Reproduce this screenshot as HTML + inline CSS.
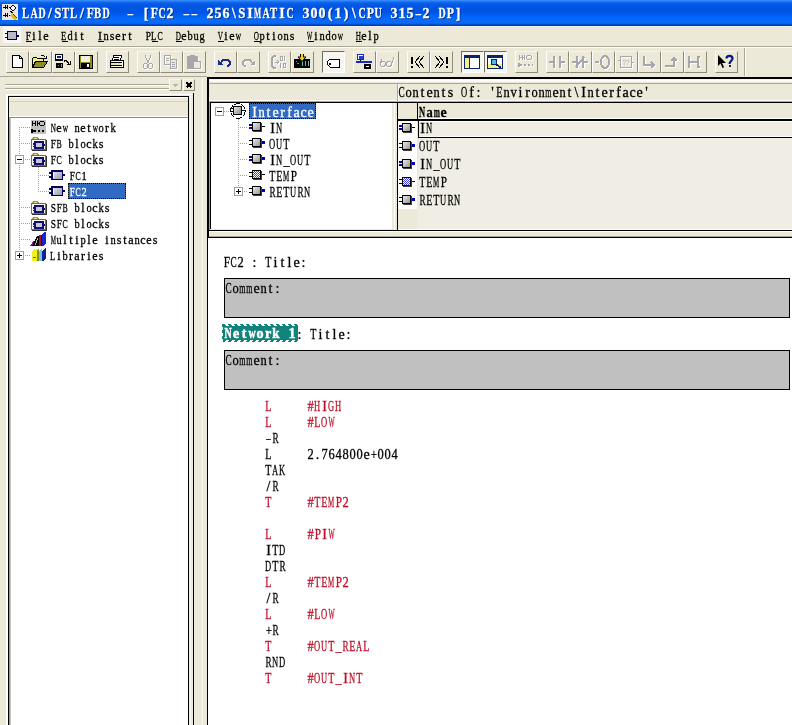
<!DOCTYPE html><html><head><meta charset="utf-8"><style>
*{margin:0;padding:0;box-sizing:border-box}
html,body{width:792px;height:725px;overflow:hidden;background:#ECE9D8}
body>div,body>svg{position:absolute}
.t{will-change:transform;position:absolute;white-space:nowrap;font-family:"Liberation Serif",serif;line-height:16px;color:#000;display:flex;-webkit-text-stroke:0.3px}
.t i{display:flex;justify-content:center;font-style:normal;flex:none}
.t b{display:block;font-weight:inherit;flex:none}
.red{color:#BC0E28}
.btn{border-style:solid;border-width:1px;border-color:#F6F5EE #8D8A7A #8D8A7A #FFFFFF}
.prs{border-style:solid;border-width:1px;border-color:#6E6C60 #FFFFFF #FFFFFF #6E6C60;background:#F7F6F0}
</style></head><body>
<div style="left:0px;top:0px;width:792px;height:26px;background:linear-gradient(to bottom,#3D95FF 0px,#2A7BF8 1px,#0A5FEA 3px,#0055E3 6px,#0054E3 12px,#005EF4 15px,#0068FC 18px,#0A6CF8 22px,#0862EE 23.5px,#0040B8 25px,#0035A8 26px)"></div>
<svg style="left:2px;top:4px" width="16" height="16" viewBox="0 0 16 16" shape-rendering="crispEdges"><rect x="0" y="0" width="16" height="16" fill="#E8E4E8"/><path d="M1 3h4M1 11h4M3 1v4M5 1v4M3 9v4M5 9v4M7 3h3M7 11h2" stroke="#000" stroke-width="1" fill="none"/><path d="M11 1l3 3-3 3-3-3z" stroke="#000" fill="#fff"/><path d="M8 7l3 1 -1 2z" fill="#000"/><path d="M10 10l5 5M9 11l5 5" stroke="#E8C000" stroke-width="2"/><path d="M11 10l4 4" stroke="#C00000" stroke-width="1"/></svg>
<div class="t" style="left:22px;top:6px;font-size:14px;font-weight:bold;color:#fff;text-shadow:1px 1px 0 #0A2A7A"><i style="width:8px"><b style="transform:scaleX(0.77)">L</b></i><i style="width:8px"><b style="transform:scaleX(0.71)">A</b></i><i style="width:8px"><b style="transform:scaleX(0.71)">D</b></i><i style="width:8px"><b>/</b></i><i style="width:8px"><b style="transform:scaleX(0.92)">S</b></i><i style="width:8px"><b style="transform:scaleX(0.77)">T</b></i><i style="width:8px"><b style="transform:scaleX(0.77)">L</b></i><i style="width:8px"><b>/</b></i><i style="width:8px"><b style="transform:scaleX(0.84)">F</b></i><i style="width:8px"><b style="transform:scaleX(0.77)">B</b></i><i style="width:8px"><b style="transform:scaleX(0.71)">D</b></i><i style="width:8px"></i><i style="width:8px"></i><i style="width:8px"><b style="transform:scaleX(0.76)">&#8211;</b></i><i style="width:8px"></i><i style="width:8px"><b>[</b></i><i style="width:8px"><b style="transform:scaleX(0.84)">F</b></i><i style="width:8px"><b style="transform:scaleX(0.71)">C</b></i><i style="width:8px"><b>2</b></i><i style="width:8px"></i><i style="width:8px"><b style="transform:scaleX(0.76)">&#8211;</b></i><i style="width:8px"><b style="transform:scaleX(0.76)">&#8211;</b></i><i style="width:8px"></i><i style="width:8px"><b>2</b></i><i style="width:8px"><b>5</b></i><i style="width:8px"><b>6</b></i><i style="width:8px"><b>\</b></i><i style="width:8px"><b style="transform:scaleX(0.92)">S</b></i><i style="width:8px"><b>I</b></i><i style="width:8px"><b style="transform:scaleX(0.54)">M</b></i><i style="width:8px"><b style="transform:scaleX(0.71)">A</b></i><i style="width:8px"><b style="transform:scaleX(0.77)">T</b></i><i style="width:8px"><b>I</b></i><i style="width:8px"><b style="transform:scaleX(0.71)">C</b></i><i style="width:8px"></i><i style="width:8px"><b>3</b></i><i style="width:8px"><b>0</b></i><i style="width:8px"><b>0</b></i><i style="width:8px"><b>(</b></i><i style="width:8px"><b>1</b></i><i style="width:8px"><b>)</b></i><i style="width:8px"><b>\</b></i><i style="width:8px"><b style="transform:scaleX(0.71)">C</b></i><i style="width:8px"><b style="transform:scaleX(0.84)">P</b></i><i style="width:8px"><b style="transform:scaleX(0.71)">U</b></i><i style="width:8px"></i><i style="width:8px"><b>3</b></i><i style="width:8px"><b>1</b></i><i style="width:8px"><b>5</b></i><i style="width:8px"><b style="transform:scaleX(0.76)">&#8211;</b></i><i style="width:8px"><b>2</b></i><i style="width:8px"></i><i style="width:8px"><b style="transform:scaleX(0.71)">D</b></i><i style="width:8px"><b style="transform:scaleX(0.84)">P</b></i><i style="width:8px"><b>]</b></i></div>
<div style="left:0px;top:26px;width:792px;height:1px;background:#F2F2F6"></div>
<svg style="left:3px;top:27px" width="18" height="16" viewBox="0 0 18 16" shape-rendering="crispEdges"><rect x="0" y="0" width="18" height="16" fill="#F8F7F2"/><rect x="4.5" y="4.5" width="9" height="8" fill="#B8B8C8" stroke="#000040"/><rect x="2" y="6" width="2" height="1" fill="#000040"/><rect x="2" y="10" width="2" height="1" fill="#000040"/><rect x="14" y="8" width="2" height="2" fill="#000040"/></svg>
<div class="t" style="left:25px;top:28px;font-size:12px;"><i style="width:6px"><b style="transform:scaleX(0.78)">F</b></i><i style="width:6px"><b>i</b></i><i style="width:6px"><b>l</b></i><i style="width:6px"><b>e</b></i></div>
<div style="left:26px;top:41px;width:6px;height:1px;background:#000"></div>
<div class="t" style="left:61px;top:28px;font-size:12px;"><i style="width:6px"><b style="transform:scaleX(0.71)">E</b></i><i style="width:6px"><b style="transform:scaleX(0.87)">d</b></i><i style="width:6px"><b>i</b></i><i style="width:6px"><b>t</b></i></div>
<div style="left:62px;top:41px;width:6px;height:1px;background:#000"></div>
<div class="t" style="left:97px;top:28px;font-size:12px;"><i style="width:6px"><b>I</b></i><i style="width:6px"><b style="transform:scaleX(0.87)">n</b></i><i style="width:6px"><b>s</b></i><i style="width:6px"><b>e</b></i><i style="width:6px"><b>r</b></i><i style="width:6px"><b>t</b></i></div>
<div style="left:98px;top:41px;width:6px;height:1px;background:#000"></div>
<div class="t" style="left:145px;top:28px;font-size:12px;"><i style="width:6px"><b style="transform:scaleX(0.78)">P</b></i><i style="width:6px"><b style="transform:scaleX(0.71)">L</b></i><i style="width:6px"><b style="transform:scaleX(0.65)">C</b></i></div>
<div style="left:152px;top:41px;width:6px;height:1px;background:#000"></div>
<div class="t" style="left:175px;top:28px;font-size:12px;"><i style="width:6px"><b style="transform:scaleX(0.60)">D</b></i><i style="width:6px"><b>e</b></i><i style="width:6px"><b style="transform:scaleX(0.87)">b</b></i><i style="width:6px"><b style="transform:scaleX(0.87)">u</b></i><i style="width:6px"><b style="transform:scaleX(0.87)">g</b></i></div>
<div style="left:176px;top:41px;width:6px;height:1px;background:#000"></div>
<div class="t" style="left:217px;top:28px;font-size:12px;"><i style="width:6px"><b style="transform:scaleX(0.60)">V</b></i><i style="width:6px"><b>i</b></i><i style="width:6px"><b>e</b></i><i style="width:6px"><b style="transform:scaleX(0.60)">w</b></i></div>
<div style="left:218px;top:41px;width:6px;height:1px;background:#000"></div>
<div class="t" style="left:253px;top:28px;font-size:12px;"><i style="width:6px"><b style="transform:scaleX(0.60)">O</b></i><i style="width:6px"><b style="transform:scaleX(0.87)">p</b></i><i style="width:6px"><b>t</b></i><i style="width:6px"><b>i</b></i><i style="width:6px"><b style="transform:scaleX(0.87)">o</b></i><i style="width:6px"><b style="transform:scaleX(0.87)">n</b></i><i style="width:6px"><b>s</b></i></div>
<div style="left:254px;top:41px;width:6px;height:1px;background:#000"></div>
<div class="t" style="left:307px;top:28px;font-size:12px;"><i style="width:6px"><b style="transform:scaleX(0.46)">W</b></i><i style="width:6px"><b>i</b></i><i style="width:6px"><b style="transform:scaleX(0.87)">n</b></i><i style="width:6px"><b style="transform:scaleX(0.87)">d</b></i><i style="width:6px"><b style="transform:scaleX(0.87)">o</b></i><i style="width:6px"><b style="transform:scaleX(0.60)">w</b></i></div>
<div style="left:308px;top:41px;width:6px;height:1px;background:#000"></div>
<div class="t" style="left:355px;top:28px;font-size:12px;"><i style="width:6px"><b style="transform:scaleX(0.60)">H</b></i><i style="width:6px"><b>e</b></i><i style="width:6px"><b>l</b></i><i style="width:6px"><b style="transform:scaleX(0.87)">p</b></i></div>
<div style="left:356px;top:41px;width:6px;height:1px;background:#000"></div>
<div style="left:0px;top:46px;width:792px;height:1px;background:#ACA899"></div>
<div style="left:0px;top:47px;width:792px;height:1px;background:#FFFFFF"></div>
<div style="left:0px;top:76px;width:207px;height:1px;background:#ACA899"></div>
<div style="left:744px;top:48px;width:1px;height:28px;background:#ACA899"></div>
<div style="left:745px;top:48px;width:1px;height:28px;background:#FFFFFF"></div>
<div class="btn" style="left:6px;top:51px;width:23px;height:22px"></div>
<div class="btn" style="left:29px;top:51px;width:23px;height:22px"></div>
<div class="btn" style="left:52px;top:51px;width:23px;height:22px"></div>
<div class="btn" style="left:75px;top:51px;width:23px;height:22px"></div>
<div class="btn" style="left:106px;top:51px;width:23px;height:22px"></div>
<div class="btn" style="left:137px;top:51px;width:23px;height:22px"></div>
<div class="btn" style="left:160px;top:51px;width:23px;height:22px"></div>
<div class="btn" style="left:183px;top:51px;width:23px;height:22px"></div>
<div class="btn" style="left:214px;top:51px;width:23px;height:22px"></div>
<div class="btn" style="left:237px;top:51px;width:23px;height:22px"></div>
<div class="btn" style="left:268px;top:51px;width:23px;height:22px"></div>
<div class="btn" style="left:291px;top:51px;width:23px;height:22px"></div>
<div class="prs" style="left:322px;top:51px;width:23px;height:22px"></div>
<div class="btn" style="left:353px;top:51px;width:23px;height:22px"></div>
<div class="btn" style="left:376px;top:51px;width:23px;height:22px"></div>
<div class="btn" style="left:407px;top:51px;width:23px;height:22px"></div>
<div class="btn" style="left:430px;top:51px;width:23px;height:22px"></div>
<div class="prs" style="left:461px;top:51px;width:23px;height:22px"></div>
<div class="prs" style="left:484px;top:51px;width:23px;height:22px"></div>
<div class="btn" style="left:515px;top:51px;width:23px;height:22px"></div>
<div class="btn" style="left:546px;top:51px;width:23px;height:22px"></div>
<div class="btn" style="left:569px;top:51px;width:23px;height:22px"></div>
<div class="btn" style="left:592px;top:51px;width:23px;height:22px"></div>
<div class="btn" style="left:615px;top:51px;width:23px;height:22px"></div>
<div class="btn" style="left:638px;top:51px;width:23px;height:22px"></div>
<div class="btn" style="left:661px;top:51px;width:23px;height:22px"></div>
<div class="btn" style="left:684px;top:51px;width:23px;height:22px"></div>
<div class="btn" style="left:715px;top:51px;width:23px;height:22px"></div>
<svg style="left:9px;top:54px" width="16" height="16" viewBox="0 0 16 16" shape-rendering="crispEdges"><path d="M3.5 1.5h7l3 3v9h-10z" fill="#fff" stroke="#000"/><path d="M10.5 1.5v3h3" fill="none" stroke="#000"/></svg>
<svg style="left:32px;top:54px" width="16" height="16" viewBox="0 0 16 16" shape-rendering="crispEdges"><path d="M0.5 13.5v-9l1-1h3l1 1h6v3" fill="#F8F080" stroke="#000"/><path d="M0.5 13.5l3-6h12l-4 6z" fill="#8C8C28" stroke="#000"/><path d="M8.5 2.5c1-2 3-2 4 0l1 1" stroke="#000" fill="none"/><path d="M12 4h2.5v-2.5" stroke="#000" fill="none"/></svg>
<svg style="left:55px;top:54px" width="16" height="16" viewBox="0 0 16 16" shape-rendering="crispEdges"><rect x="0.5" y="0.5" width="7" height="5" fill="#fff" stroke="#000"/><rect x="2" y="2" width="4" height="2" fill="#1020B0"/><rect x="0" y="6" width="8" height="1" fill="#000"/><rect x="1" y="9" width="7" height="5" fill="#000"/><path d="M3 11l1 1M6 10v3" stroke="#40C0B0"/><path d="M9 7.5c1-1 2-1 3 0c1 1 2 1 2 2" stroke="#000" fill="none"/><path d="M12 10h3v-3" stroke="#000" fill="none"/></svg>
<svg style="left:78px;top:54px" width="16" height="16" viewBox="0 0 16 16" shape-rendering="crispEdges"><rect x="1" y="1" width="14" height="14" fill="#000"/><rect x="2" y="2" width="12" height="12" fill="#8C8C20"/><rect x="3" y="2" width="9" height="6" fill="#F0F0E0"/><rect x="3" y="9" width="9" height="5" fill="#000"/><rect x="9" y="10" width="2" height="3" fill="#fff"/></svg>
<svg style="left:109px;top:54px" width="16" height="16" viewBox="0 0 16 16" shape-rendering="crispEdges"><path d="M4.5 1.5h8l-1 5h-8z" fill="#fff" stroke="#000"/><path d="M5 3h5M5 5h5" stroke="#000"/><rect x="1.5" y="6.5" width="13" height="7" rx="1" fill="#fff" stroke="#000"/><rect x="2" y="9" width="10" height="2" fill="#E8E8A0"/><path d="M2 8.5h11M2 11.5h11" stroke="#000"/></svg>
<svg style="left:140px;top:54px" width="17" height="17" viewBox="0 0 17 17" shape-rendering="crispEdges"><g transform="translate(1 1)"><path d="M5 1l3 8M11 1l-3 8" stroke="#FFFFFF" fill="none"/><circle cx="5.5" cy="12" r="2.5" stroke="#FFFFFF" fill="none"/><circle cx="10.5" cy="12" r="2.5" stroke="#FFFFFF" fill="none"/></g><path d="M5 1l3 8M11 1l-3 8" stroke="#A7A6AA" fill="none"/><circle cx="5.5" cy="12" r="2.5" stroke="#A7A6AA" fill="none"/><circle cx="10.5" cy="12" r="2.5" stroke="#A7A6AA" fill="none"/></svg>
<svg style="left:163px;top:54px" width="17" height="17" viewBox="0 0 17 17" shape-rendering="crispEdges"><g transform="translate(1 1)"><path d="M1.5 1.5h6v9h-6z" fill="none" stroke="#FFFFFF"/><path d="M7.5 5.5h6v9h-6z" fill="#ECE9D8" stroke="#FFFFFF"/><path d="M3 4h3M3 6h3M9 8h3M9 10h3M9 12h3" stroke="#FFFFFF"/></g><path d="M1.5 1.5h6v9h-6z" fill="none" stroke="#A7A6AA"/><path d="M7.5 5.5h6v9h-6z" fill="#ECE9D8" stroke="#A7A6AA"/><path d="M3 4h3M3 6h3M9 8h3M9 10h3M9 12h3" stroke="#A7A6AA"/></svg>
<svg style="left:186px;top:54px" width="17" height="17" viewBox="0 0 17 17" shape-rendering="crispEdges"><g transform="translate(1 1)"><rect x="1.5" y="2.5" width="10" height="12" fill="#FFFFFF" stroke="#FFFFFF"/><rect x="7.5" y="7.5" width="7" height="7" fill="#ECE9D8" stroke="#FFFFFF"/><rect x="4" y="1" width="5" height="3" fill="#FFFFFF"/></g><rect x="1.5" y="2.5" width="10" height="12" fill="#A7A6AA" stroke="#A7A6AA"/><rect x="7.5" y="7.5" width="7" height="7" fill="#ECE9D8" stroke="#A7A6AA"/><rect x="4" y="1" width="5" height="3" fill="#A7A6AA"/></svg>
<svg style="left:217px;top:54px" width="16" height="16" viewBox="0 0 16 16" shape-rendering="crispEdges"><path d="M4 9c1-4 8-5 9 0c0 2-2 3-3 3" stroke="#1A2A90" stroke-width="2" fill="none"/><path d="M1 6l5 5h-5z" fill="#1A2A90"/></svg>
<svg style="left:240px;top:54px" width="17" height="17" viewBox="0 0 17 17" shape-rendering="crispEdges"><g transform="translate(1 1)"><path d="M12 9c-1-4-8-5-9 0c0 2 2 3 3 3" stroke="#FFFFFF" stroke-width="2" fill="none"/><path d="M15 6l-5 5h5z" fill="#FFFFFF"/></g><path d="M12 9c-1-4-8-5-9 0c0 2 2 3 3 3" stroke="#A7A6AA" stroke-width="2" fill="none"/><path d="M15 6l-5 5h5z" fill="#A7A6AA"/></svg>
<svg style="left:271px;top:54px" width="17" height="17" viewBox="0 0 17 17" shape-rendering="crispEdges"><g transform="translate(1 1)"><path d="M5 2H3L1 4v8l2 2h2" stroke="#FFFFFF" stroke-width="2.5" fill="none"/><path d="M4 8h3M6 6l2 2-2 2" stroke="#FFFFFF" fill="none"/><path d="M9.5 2.5h2v4h-2zM13.5 2v5M9.5 9v5M12.5 9.5h2v4h-2z" stroke="#FFFFFF" fill="none"/></g><path d="M5 2H3L1 4v8l2 2h2" stroke="#A7A6AA" stroke-width="2.5" fill="none"/><path d="M4 8h3M6 6l2 2-2 2" stroke="#A7A6AA" fill="none"/><path d="M9.5 2.5h2v4h-2zM13.5 2v5M9.5 9v5M12.5 9.5h2v4h-2z" stroke="#A7A6AA" fill="none"/></svg>
<svg style="left:294px;top:54px" width="16" height="16" viewBox="0 0 16 16" shape-rendering="crispEdges"><rect x="0" y="5" width="16" height="9" fill="#000"/><path d="M8.5 7v5M11.5 7v5M14.5 7v5" stroke="#40C8B8"/><path d="M2 7v1M3 9l2 1" stroke="#40A0C0"/><path d="M6.5 -0.5h3v3.5h2.5l-4 4.5-4-4.5h2.5z" fill="#F0D020" stroke="#000" shape-rendering="geometricPrecision"/></svg>
<svg style="left:325px;top:54px" width="16" height="16" viewBox="0 0 16 16" shape-rendering="crispEdges"><path d="M3 5l2-2h9v8h-9l-3-3z" fill="#fff" stroke="#000" transform="translate(0 2)"/><circle cx="5" cy="10" r="1" fill="#000"/></svg>
<svg style="left:356px;top:54px" width="16" height="16" viewBox="0 0 16 16" shape-rendering="crispEdges"><rect x="1.5" y="0.5" width="6" height="5" fill="#fff" stroke="#1A2AC0"/><rect x="2.5" y="1.5" width="4" height="3" fill="#2040D0"/><path d="M4 6v2" stroke="#000"/><path d="M0 8h16" stroke="#1A2AC0" stroke-width="2"/><rect x="8" y="10" width="7" height="5" fill="#000"/><path d="M10 12h3" stroke="#fff"/></svg>
<svg style="left:379px;top:54px" width="17" height="17" viewBox="0 0 17 17" shape-rendering="crispEdges"><g transform="translate(1 1)"><circle cx="4" cy="10" r="2.5" stroke="#FFFFFF" fill="none"/><circle cx="10" cy="10" r="2.5" stroke="#FFFFFF" fill="none"/><path d="M1 9l2-4M13 9l2-6M6 9h2" stroke="#FFFFFF"/></g><circle cx="4" cy="10" r="2.5" stroke="#A7A6AA" fill="none"/><circle cx="10" cy="10" r="2.5" stroke="#A7A6AA" fill="none"/><path d="M1 9l2-4M13 9l2-6M6 9h2" stroke="#A7A6AA"/></svg>
<svg style="left:410px;top:54px" width="16" height="16" viewBox="0 0 16 16" shape-rendering="crispEdges"><path d="M2 3v7M2 12v2" stroke="#000" stroke-width="2"/><path d="M10 2l-5 6 5 6M14 2l-5 6 5 6" stroke="#000" fill="none"/></svg>
<svg style="left:433px;top:54px" width="16" height="16" viewBox="0 0 16 16" shape-rendering="crispEdges"><path d="M14 3v7M14 12v2" stroke="#000" stroke-width="2"/><path d="M2 2l5 6-5 6M6 2l5 6-5 6" stroke="#000" fill="none"/></svg>
<svg style="left:464px;top:54px" width="16" height="16" viewBox="0 0 16 16" shape-rendering="crispEdges"><rect x="0.5" y="1.5" width="15" height="13" fill="#fff" stroke="#0A246A"/><rect x="1" y="2" width="14" height="2" fill="#0A246A"/><rect x="1" y="4" width="4" height="10" fill="#F8F080"/><path d="M5.5 4v10" stroke="#0A246A"/></svg>
<svg style="left:487px;top:54px" width="16" height="16" viewBox="0 0 16 16" shape-rendering="crispEdges"><rect x="0.5" y="1.5" width="15" height="13" fill="#F8F080" stroke="#0A246A"/><rect x="1" y="2" width="14" height="2" fill="#0A246A"/><rect x="1" y="4" width="14" height="6" fill="#fff"/><circle cx="7" cy="8" r="3" fill="#40C0E0" stroke="#0A246A"/><path d="M9 10l5 4" stroke="#0A246A" stroke-width="2"/></svg>
<svg style="left:518px;top:54px" width="17" height="17" viewBox="0 0 17 17" shape-rendering="crispEdges"><g transform="translate(1 1)"><path d="M1 1v5M4 1v5M6 1v5M1 3h5" stroke="#FFFFFF"/><circle cx="11" cy="3.5" r="2.5" stroke="#FFFFFF" fill="none"/><path d="M1 9v4M1 11h3M6 11h2M10 11h2M14 11h1" stroke="#FFFFFF" stroke-width="2"/></g><path d="M1 1v5M4 1v5M6 1v5M1 3h5" stroke="#A7A6AA"/><circle cx="11" cy="3.5" r="2.5" stroke="#A7A6AA" fill="none"/><path d="M1 9v4M1 11h3M6 11h2M10 11h2M14 11h1" stroke="#A7A6AA" stroke-width="2"/></svg>
<svg style="left:549px;top:54px" width="17" height="17" viewBox="0 0 17 17" shape-rendering="crispEdges"><g transform="translate(1 1)"><path d="M0 8h5M11 8h5M5 2v12M11 2v12" stroke="#FFFFFF" stroke-width="2"/></g><path d="M0 8h5M11 8h5M5 2v12M11 2v12" stroke="#A7A6AA" stroke-width="2"/></svg>
<svg style="left:572px;top:54px" width="17" height="17" viewBox="0 0 17 17" shape-rendering="crispEdges"><g transform="translate(1 1)"><path d="M0 8h5M11 8h5M5 2v12M11 2v12M12 3l-8 10" stroke="#FFFFFF" stroke-width="2"/></g><path d="M0 8h5M11 8h5M5 2v12M11 2v12M12 3l-8 10" stroke="#A7A6AA" stroke-width="2"/></svg>
<svg style="left:595px;top:54px" width="17" height="17" viewBox="0 0 17 17" shape-rendering="crispEdges"><g transform="translate(1 1)"><path d="M0 8h4" stroke="#FFFFFF" stroke-width="2"/><ellipse cx="10" cy="8" rx="4" ry="6" stroke="#FFFFFF" stroke-width="2" fill="none"/></g><path d="M0 8h4" stroke="#A7A6AA" stroke-width="2"/><ellipse cx="10" cy="8" rx="4" ry="6" stroke="#A7A6AA" stroke-width="2" fill="none"/></svg>
<svg style="left:618px;top:54px" width="17" height="17" viewBox="0 0 17 17" shape-rendering="crispEdges"><g transform="translate(1 1)"><rect x="2.5" y="2.5" width="11" height="11" fill="none" stroke="#FFFFFF"/><path d="M0 6h2M14 8h2" stroke="#FFFFFF"/><text x="8" y="10.5" font-size="6.5" text-anchor="middle" fill="#FFFFFF" font-family="Liberation Sans">??</text></g><rect x="2.5" y="2.5" width="11" height="11" fill="none" stroke="#A7A6AA"/><path d="M0 6h2M14 8h2" stroke="#A7A6AA"/><text x="8" y="10.5" font-size="6.5" text-anchor="middle" fill="#A7A6AA" font-family="Liberation Sans">??</text></svg>
<svg style="left:641px;top:54px" width="17" height="17" viewBox="0 0 17 17" shape-rendering="crispEdges"><g transform="translate(1 1)"><path d="M3 2v9h10M10 8l3 3-3 3" stroke="#FFFFFF" stroke-width="2" fill="none"/></g><path d="M3 2v9h10M10 8l3 3-3 3" stroke="#A7A6AA" stroke-width="2" fill="none"/></svg>
<svg style="left:664px;top:54px" width="17" height="17" viewBox="0 0 17 17" shape-rendering="crispEdges"><g transform="translate(1 1)"><path d="M1 12h9V4M7 7l3-3 3 3" stroke="#FFFFFF" stroke-width="2" fill="none"/></g><path d="M1 12h9V4M7 7l3-3 3 3" stroke="#A7A6AA" stroke-width="2" fill="none"/></svg>
<svg style="left:687px;top:54px" width="17" height="17" viewBox="0 0 17 17" shape-rendering="crispEdges"><g transform="translate(1 1)"><path d="M2 2v12M2 8h10M13 3h-2v10h2" stroke="#FFFFFF" stroke-width="1.5" fill="none"/></g><path d="M2 2v12M2 8h10M13 3h-2v10h2" stroke="#A7A6AA" stroke-width="1.5" fill="none"/></svg>
<svg style="left:718px;top:54px" width="16" height="16" viewBox="0 0 16 16" shape-rendering="crispEdges"><path d="M0 1v11l2.5-2.5 2 4.5 1.6-.8-2-4.2H8z" fill="#000" shape-rendering="geometricPrecision"/><path d="M8.5 4.5c0-3.5 6-3.5 6 0c0 2.5-3 2.2-3 5.5" stroke="#0A1A80" stroke-width="2.2" fill="none" shape-rendering="geometricPrecision"/><rect x="10.5" y="11" width="2.2" height="2" fill="#0A1A80"/></svg>
<div style="left:5px;top:84px;width:164px;height:1px;background:#ACA899"></div>
<div style="left:5px;top:85px;width:164px;height:1px;background:#FFFFFF"></div>
<div style="left:5px;top:88px;width:164px;height:1px;background:#ACA899"></div>
<div style="left:5px;top:89px;width:164px;height:1px;background:#FFFFFF"></div>
<div class="btn" style="left:169px;top:79px;width:13px;height:12px"></div>
<svg style="left:173px;top:84px" width="5" height="3" viewBox="0 0 5 3" shape-rendering="crispEdges"><path d="M0 0h5L2.5 3z" fill="#B8B6AC"/></svg>
<div class="btn" style="left:183px;top:79px;width:12px;height:12px"></div>
<svg style="left:185px;top:81px" width="8" height="8" viewBox="0 0 8 8" shape-rendering="crispEdges"><path d="M1.5 1.5l5 5M6.5 1.5l-5 5" stroke="#000" stroke-width="2"/></svg>
<div style="left:6px;top:94px;width:2px;height:631px;background:#FFFFFF"></div>
<div style="left:6px;top:94px;width:188px;height:1px;background:#FFFFFF"></div>
<div style="left:193px;top:93px;width:1px;height:632px;background:#000"></div>
<div style="left:190px;top:95px;width:1px;height:630px;background:#F8F7F0"></div>
<div style="left:8px;top:96px;width:1px;height:629px;background:#000"></div>
<div style="left:8px;top:96px;width:181px;height:1px;background:#000"></div>
<div style="left:188px;top:96px;width:1px;height:629px;background:#000"></div>
<div style="left:9px;top:97px;width:179px;height:1px;background:#FFFFFF"></div>
<div style="left:9px;top:101px;width:179px;height:1px;background:#D8D4C4"></div>
<div style="left:9px;top:116px;width:179px;height:1px;background:#FFFFFF"></div>
<div style="left:9px;top:117px;width:179px;height:1px;background:#8C8A7C"></div>
<div style="left:11px;top:118px;width:177px;height:607px;background:#FFFFFF"></div>
<div style="left:9px;top:118px;width:1px;height:607px;background:#9C9A90"></div>
<div style="left:10px;top:118px;width:1px;height:607px;background:#C8C6BC"></div>
<div style="left:202px;top:77px;width:1px;height:648px;background:#F8F7F0"></div>
<div style="left:207px;top:77px;width:585px;height:2px;background:#000"></div>
<div style="left:207px;top:77px;width:2px;height:161px;background:#000"></div>
<div style="left:207px;top:238px;width:1px;height:487px;background:#000"></div>
<div style="left:209px;top:79px;width:583px;height:1px;background:#F4F3EC"></div>
<div style="left:209px;top:80px;width:583px;height:1px;background:#FFFFFF"></div>
<div style="left:209px;top:81px;width:583px;height:1px;background:#F8F7F0"></div>
<div style="left:209px;top:83px;width:583px;height:1px;background:#ACA899"></div>
<div style="left:209px;top:100px;width:583px;height:1px;background:#FFFFFF"></div>
<div style="left:209px;top:101px;width:583px;height:1px;background:#ACA899"></div>
<div style="left:209px;top:102px;width:583px;height:1px;background:#000"></div>
<div style="left:209px;top:102px;width:1px;height:128px;background:#A0A09C"></div>
<div style="left:210px;top:102px;width:1px;height:127px;background:#000"></div>
<div style="left:211px;top:103px;width:181px;height:126px;background:#fff"></div>
<div style="left:394px;top:103px;width:1px;height:127px;background:#FFFFFF"></div>
<div style="left:397px;top:83px;width:1px;height:19px;background:#ACA899"></div>
<div style="left:397px;top:102px;width:1px;height:128px;background:#000"></div>
<div style="left:398px;top:84px;width:1px;height:16px;background:#FFFFFF"></div>
<div class="t" style="left:398px;top:85px;font-size:14px;"><i style="width:7px"><b style="transform:scaleX(0.66)">C</b></i><i style="width:7px"><b style="transform:scaleX(0.89)">o</b></i><i style="width:7px"><b style="transform:scaleX(0.89)">n</b></i><i style="width:7px"><b>t</b></i><i style="width:7px"><b>e</b></i><i style="width:7px"><b style="transform:scaleX(0.89)">n</b></i><i style="width:7px"><b>t</b></i><i style="width:7px"><b>s</b></i><i style="width:7px"></i><i style="width:7px"><b style="transform:scaleX(0.61)">O</b></i><i style="width:7px"><b>f</b></i><i style="width:7px"><b>:</b></i><i style="width:7px"></i><i style="width:7px"><b>'</b></i><i style="width:7px"><b style="transform:scaleX(0.72)">E</b></i><i style="width:7px"><b style="transform:scaleX(0.89)">n</b></i><i style="width:7px"><b style="transform:scaleX(0.89)">v</b></i><i style="width:7px"><b>i</b></i><i style="width:7px"><b>r</b></i><i style="width:7px"><b style="transform:scaleX(0.89)">o</b></i><i style="width:7px"><b style="transform:scaleX(0.89)">n</b></i><i style="width:7px"><b style="transform:scaleX(0.57)">m</b></i><i style="width:7px"><b>e</b></i><i style="width:7px"><b style="transform:scaleX(0.89)">n</b></i><i style="width:7px"><b>t</b></i><i style="width:7px"><b>\</b></i><i style="width:7px"><b>I</b></i><i style="width:7px"><b style="transform:scaleX(0.89)">n</b></i><i style="width:7px"><b>t</b></i><i style="width:7px"><b>e</b></i><i style="width:7px"><b>r</b></i><i style="width:7px"><b>f</b></i><i style="width:7px"><b>a</b></i><i style="width:7px"><b>c</b></i><i style="width:7px"><b>e</b></i><i style="width:7px"><b>'</b></i></div>
<div style="left:398px;top:103px;width:394px;height:16px;background:#ECE9D8"></div>
<div style="left:417px;top:103px;width:1px;height:16px;background:#000"></div>
<div style="left:418px;top:118px;width:374px;height:1px;background:#FFFFFF"></div>
<div class="t" style="left:419px;top:105px;font-size:14px;font-weight:bold;"><i style="width:7px"><b style="transform:scaleX(0.61)">N</b></i><i style="width:7px"><b style="transform:scaleX(0.89)">a</b></i><i style="width:7px"><b style="transform:scaleX(0.53)">m</b></i><i style="width:7px"><b>e</b></i></div>
<div style="left:398px;top:119px;width:394px;height:2px;background:#000"></div>
<div style="left:418px;top:121px;width:374px;height:108px;background:#F0EEE4"></div>
<div style="left:418px;top:121px;width:374px;height:1px;background:#FFFFFF"></div>
<div style="left:398px;top:121px;width:19px;height:88px;background:#FFFFFF"></div>
<div style="left:418px;top:121px;width:1px;height:16px;background:#000"></div>
<div style="left:419px;top:136px;width:373px;height:1px;background:#FFFFFF"></div>
<div style="left:418px;top:137px;width:374px;height:1px;background:#000"></div>
<div style="left:398px;top:229px;width:394px;height:1px;background:#FFFFFF"></div>
<div style="left:207px;top:230px;width:585px;height:1px;background:#000"></div>
<div style="left:209px;top:231px;width:583px;height:1px;background:#FFFFFF"></div>
<div style="left:209px;top:236px;width:583px;height:1px;background:#ACA899"></div>
<div style="left:207px;top:237px;width:585px;height:1px;background:#000"></div>
<div style="left:208px;top:238px;width:584px;height:487px;background:#FFFFFF"></div>
<div style="left:19px;top:127px;width:1px;height:128px;background:repeating-linear-gradient(to bottom,#A0A0A0 0 1px,transparent 1px 2px)"></div>
<div style="left:21px;top:127px;width:10px;height:1px;background:repeating-linear-gradient(to right,#A0A0A0 0 1px,transparent 1px 2px)"></div>
<div style="left:21px;top:143px;width:10px;height:1px;background:repeating-linear-gradient(to right,#A0A0A0 0 1px,transparent 1px 2px)"></div>
<div style="left:21px;top:207px;width:10px;height:1px;background:repeating-linear-gradient(to right,#A0A0A0 0 1px,transparent 1px 2px)"></div>
<div style="left:21px;top:223px;width:10px;height:1px;background:repeating-linear-gradient(to right,#A0A0A0 0 1px,transparent 1px 2px)"></div>
<div style="left:21px;top:239px;width:10px;height:1px;background:repeating-linear-gradient(to right,#A0A0A0 0 1px,transparent 1px 2px)"></div>
<div style="left:25px;top:159px;width:5px;height:1px;background:repeating-linear-gradient(to right,#A0A0A0 0 1px,transparent 1px 2px)"></div>
<div style="left:25px;top:255px;width:5px;height:1px;background:repeating-linear-gradient(to right,#A0A0A0 0 1px,transparent 1px 2px)"></div>
<svg style="left:15px;top:155px" width="9" height="9" viewBox="0 0 9 9" shape-rendering="crispEdges"><rect x="0.5" y="0.5" width="8" height="8" fill="#fff" stroke="#A0A0A0"/><path d="M2 4.5h5" stroke="#000"/></svg>
<svg style="left:15px;top:251px" width="9" height="9" viewBox="0 0 9 9" shape-rendering="crispEdges"><rect x="0.5" y="0.5" width="8" height="8" fill="#fff" stroke="#A0A0A0"/><path d="M2 4.5h5" stroke="#000"/><path d="M4.5 2v5" stroke="#000"/></svg>
<svg style="left:31px;top:120px" width="15" height="14" viewBox="0 0 15 14" shape-rendering="crispEdges"><rect x="0" y="0" width="15" height="14" fill="#C0C0C0"/><path d="M1 1v5M4 1v5M1 3h3M6 1v5M6 3h2" stroke="#000"/><circle cx="11" cy="3.5" r="2.5" stroke="#000" fill="none"/><path d="M1 9v4M1 11h4M7 11h2M11 11h2" stroke="#000" stroke-width="2"/></svg>
<div class="t" style="left:50px;top:120px;font-size:12px;"><i style="width:6px"><b style="transform:scaleX(0.60)">N</b></i><i style="width:6px"><b>e</b></i><i style="width:6px"><b style="transform:scaleX(0.60)">w</b></i><i style="width:6px"></i><i style="width:6px"><b style="transform:scaleX(0.87)">n</b></i><i style="width:6px"><b>e</b></i><i style="width:6px"><b>t</b></i><i style="width:6px"><b style="transform:scaleX(0.60)">w</b></i><i style="width:6px"><b style="transform:scaleX(0.87)">o</b></i><i style="width:6px"><b>r</b></i><i style="width:6px"><b style="transform:scaleX(0.87)">k</b></i></div>
<svg style="left:31px;top:137px" width="16" height="14" viewBox="0 0 16 14" shape-rendering="crispEdges"><path d="M1.5 2.5l1-2h4l1 2" fill="#E8E890" stroke="#909060"/><rect x="0.5" y="2.5" width="14" height="10" fill="#F8F7EE" stroke="#707060"/><path d="M1 13.5h15M15.5 3v11" stroke="#303030"/><rect x="4" y="5" width="8" height="6" fill="#C8C8DC" stroke="#101070" stroke-width="1.5"/><rect x="2" y="6" width="2" height="1.5" fill="#101070"/><rect x="2" y="8.5" width="2" height="1.5" fill="#101070"/><rect x="12" y="7" width="2" height="2" fill="#101070"/></svg>
<div class="t" style="left:50px;top:136px;font-size:12px;"><i style="width:6px"><b style="transform:scaleX(0.78)">F</b></i><i style="width:6px"><b style="transform:scaleX(0.65)">B</b></i><i style="width:6px"></i><i style="width:6px"><b style="transform:scaleX(0.87)">b</b></i><i style="width:6px"><b>l</b></i><i style="width:6px"><b style="transform:scaleX(0.87)">o</b></i><i style="width:6px"><b>c</b></i><i style="width:6px"><b style="transform:scaleX(0.87)">k</b></i><i style="width:6px"><b>s</b></i></div>
<svg style="left:31px;top:153px" width="16" height="14" viewBox="0 0 16 14" shape-rendering="crispEdges"><path d="M1.5 2.5l1-2h4l1 2" fill="#E8E890" stroke="#909060"/><rect x="0.5" y="2.5" width="14" height="10" fill="#F8F7EE" stroke="#707060"/><path d="M1 13.5h15M15.5 3v11" stroke="#303030"/><rect x="4" y="5" width="8" height="6" fill="#C8C8DC" stroke="#101070" stroke-width="1.5"/><rect x="2" y="6" width="2" height="1.5" fill="#101070"/><rect x="2" y="8.5" width="2" height="1.5" fill="#101070"/><rect x="12" y="7" width="2" height="2" fill="#101070"/></svg>
<div class="t" style="left:50px;top:152px;font-size:12px;"><i style="width:6px"><b style="transform:scaleX(0.78)">F</b></i><i style="width:6px"><b style="transform:scaleX(0.65)">C</b></i><i style="width:6px"></i><i style="width:6px"><b style="transform:scaleX(0.87)">b</b></i><i style="width:6px"><b>l</b></i><i style="width:6px"><b style="transform:scaleX(0.87)">o</b></i><i style="width:6px"><b>c</b></i><i style="width:6px"><b style="transform:scaleX(0.87)">k</b></i><i style="width:6px"><b>s</b></i></div>
<div style="left:38px;top:165px;width:1px;height:27px;background:repeating-linear-gradient(to bottom,#A0A0A0 0 1px,transparent 1px 2px)"></div>
<div style="left:40px;top:175px;width:9px;height:1px;background:repeating-linear-gradient(to right,#A0A0A0 0 1px,transparent 1px 2px)"></div>
<div style="left:40px;top:191px;width:9px;height:1px;background:repeating-linear-gradient(to right,#A0A0A0 0 1px,transparent 1px 2px)"></div>
<svg style="left:49px;top:170px" width="16" height="10" viewBox="0 0 16 10" shape-rendering="crispEdges"><defs><linearGradient id="gfc" x1="0" y1="0" x2="1" y2="1"><stop offset="0" stop-color="#E8E8F0"/><stop offset="1" stop-color="#9898B0"/></linearGradient></defs><rect x="0" y="2" width="2" height="2" fill="#000060"/><rect x="0" y="6" width="2" height="2" fill="#000060"/><rect x="14" y="4" width="2" height="2" fill="#000060"/><rect x="2.75" y="0.75" width="10.5" height="8.5" fill="url(#gfc)" stroke="#000060" stroke-width="1.5"/><path d="M4 2v6" stroke="#fff"/></svg>
<div class="t" style="left:69px;top:168px;font-size:12px;"><i style="width:6px"><b style="transform:scaleX(0.78)">F</b></i><i style="width:6px"><b style="transform:scaleX(0.65)">C</b></i><i style="width:6px"><b style="transform:scaleX(0.87)">1</b></i></div>
<svg style="left:49px;top:186px" width="16" height="10" viewBox="0 0 16 10" shape-rendering="crispEdges"><defs><linearGradient id="gfc" x1="0" y1="0" x2="1" y2="1"><stop offset="0" stop-color="#E8E8F0"/><stop offset="1" stop-color="#9898B0"/></linearGradient></defs><rect x="0" y="2" width="2" height="2" fill="#000060"/><rect x="0" y="6" width="2" height="2" fill="#000060"/><rect x="14" y="4" width="2" height="2" fill="#000060"/><rect x="2.75" y="0.75" width="10.5" height="8.5" fill="url(#gfc)" stroke="#000060" stroke-width="1.5"/><path d="M4 2v6" stroke="#fff"/></svg>
<div style="left:68px;top:183px;width:58px;height:16px;background:#316AC5;outline:1px dotted #000;outline-offset:-1px"></div>
<div class="t" style="left:69px;top:184px;font-size:12px;color:#fff"><i style="width:6px"><b style="transform:scaleX(0.78)">F</b></i><i style="width:6px"><b style="transform:scaleX(0.65)">C</b></i><i style="width:6px"><b style="transform:scaleX(0.87)">2</b></i></div>
<svg style="left:31px;top:201px" width="16" height="14" viewBox="0 0 16 14" shape-rendering="crispEdges"><path d="M1.5 2.5l1-2h4l1 2" fill="#E8E890" stroke="#909060"/><rect x="0.5" y="2.5" width="14" height="10" fill="#F8F7EE" stroke="#707060"/><path d="M1 13.5h15M15.5 3v11" stroke="#303030"/><rect x="4" y="5" width="8" height="6" fill="#C8C8DC" stroke="#101070" stroke-width="1.5"/><rect x="2" y="6" width="2" height="1.5" fill="#101070"/><rect x="2" y="8.5" width="2" height="1.5" fill="#101070"/><rect x="12" y="7" width="2" height="2" fill="#101070"/></svg>
<div class="t" style="left:50px;top:200px;font-size:12px;"><i style="width:6px"><b style="transform:scaleX(0.78)">S</b></i><i style="width:6px"><b style="transform:scaleX(0.78)">F</b></i><i style="width:6px"><b style="transform:scaleX(0.65)">B</b></i><i style="width:6px"></i><i style="width:6px"><b style="transform:scaleX(0.87)">b</b></i><i style="width:6px"><b>l</b></i><i style="width:6px"><b style="transform:scaleX(0.87)">o</b></i><i style="width:6px"><b>c</b></i><i style="width:6px"><b style="transform:scaleX(0.87)">k</b></i><i style="width:6px"><b>s</b></i></div>
<svg style="left:31px;top:217px" width="16" height="14" viewBox="0 0 16 14" shape-rendering="crispEdges"><path d="M1.5 2.5l1-2h4l1 2" fill="#E8E890" stroke="#909060"/><rect x="0.5" y="2.5" width="14" height="10" fill="#F8F7EE" stroke="#707060"/><path d="M1 13.5h15M15.5 3v11" stroke="#303030"/><rect x="4" y="5" width="8" height="6" fill="#C8C8DC" stroke="#101070" stroke-width="1.5"/><rect x="2" y="6" width="2" height="1.5" fill="#101070"/><rect x="2" y="8.5" width="2" height="1.5" fill="#101070"/><rect x="12" y="7" width="2" height="2" fill="#101070"/></svg>
<div class="t" style="left:50px;top:216px;font-size:12px;"><i style="width:6px"><b style="transform:scaleX(0.78)">S</b></i><i style="width:6px"><b style="transform:scaleX(0.78)">F</b></i><i style="width:6px"><b style="transform:scaleX(0.65)">C</b></i><i style="width:6px"></i><i style="width:6px"><b style="transform:scaleX(0.87)">b</b></i><i style="width:6px"><b>l</b></i><i style="width:6px"><b style="transform:scaleX(0.87)">o</b></i><i style="width:6px"><b>c</b></i><i style="width:6px"><b style="transform:scaleX(0.87)">k</b></i><i style="width:6px"><b>s</b></i></div>
<svg style="left:30px;top:232px" width="16" height="14" viewBox="0 0 16 14" shape-rendering="crispEdges"><path d="M0 14l4-6 1 6z" fill="#902090"/><path d="M2 14l5-10h3v10z" fill="#000"/><path d="M5 13l3-7" stroke="#C0C0C0"/><rect x="9" y="3" width="3" height="11" fill="#B01020"/><path d="M11 14V3l3-3h2v11l-3 3z" fill="#1428D8"/><path d="M11.5 14V3.5" stroke="#000060"/></svg>
<div class="t" style="left:50px;top:232px;font-size:12px;"><i style="width:6px"><b style="transform:scaleX(0.49)">M</b></i><i style="width:6px"><b style="transform:scaleX(0.87)">u</b></i><i style="width:6px"><b>l</b></i><i style="width:6px"><b>t</b></i><i style="width:6px"><b>i</b></i><i style="width:6px"><b style="transform:scaleX(0.87)">p</b></i><i style="width:6px"><b>l</b></i><i style="width:6px"><b>e</b></i><i style="width:6px"></i><i style="width:6px"><b>i</b></i><i style="width:6px"><b style="transform:scaleX(0.87)">n</b></i><i style="width:6px"><b>s</b></i><i style="width:6px"><b>t</b></i><i style="width:6px"><b>a</b></i><i style="width:6px"><b style="transform:scaleX(0.87)">n</b></i><i style="width:6px"><b>c</b></i><i style="width:6px"><b>e</b></i><i style="width:6px"><b>s</b></i></div>
<svg style="left:32px;top:248px" width="14" height="13" viewBox="0 0 14 13" shape-rendering="crispEdges"><path d="M0 13V3l2-2h3v12z" fill="#F0F020"/><path d="M5 13V2l1-1h1v12z" fill="#909010"/><path d="M7 13V3l2-2h1v12z" fill="#70C8D8"/><path d="M10 13V3l3-3h1v10l-3 3z" fill="#1020A0"/><path d="M1 9h3" stroke="#707000"/></svg>
<div class="t" style="left:50px;top:248px;font-size:12px;"><i style="width:6px"><b style="transform:scaleX(0.71)">L</b></i><i style="width:6px"><b>i</b></i><i style="width:6px"><b style="transform:scaleX(0.87)">b</b></i><i style="width:6px"><b>r</b></i><i style="width:6px"><b>a</b></i><i style="width:6px"><b>r</b></i><i style="width:6px"><b>i</b></i><i style="width:6px"><b>e</b></i><i style="width:6px"><b>s</b></i></div>
<svg style="left:215px;top:107px" width="9" height="9" viewBox="0 0 9 9" shape-rendering="crispEdges"><rect x="0.5" y="0.5" width="8" height="8" fill="#fff" stroke="#A0A0A0"/><path d="M2 4.5h5" stroke="#000"/></svg>
<div style="left:224px;top:111px;width:6px;height:1px;background:repeating-linear-gradient(to right,#A0A0A0 0 1px,transparent 1px 2px)"></div>
<svg style="left:230px;top:103px" width="17" height="16" viewBox="0 0 17 16" shape-rendering="crispEdges"><defs><linearGradient id="gi" x1="0" y1="0" x2="1" y2="1"><stop offset="0" stop-color="#F0F0F0"/><stop offset="1" stop-color="#808080"/></linearGradient></defs><circle cx="8" cy="8" r="7.3" fill="none" stroke="#000" stroke-dasharray="6 1.5"/><rect x="3.5" y="3.5" width="8" height="8" fill="url(#gi)" stroke="#000"/><rect x="0.5" y="5.5" width="3" height="3" fill="#fff" stroke="#000"/><path d="M12 7h4" stroke="#000"/></svg>
<div style="left:249px;top:103px;width:67px;height:16px;background:#316AC5;outline:1px dotted #000;outline-offset:-1px"></div>
<div class="t" style="left:251px;top:105px;font-size:14px;color:#fff"><i style="width:7px"><b>I</b></i><i style="width:7px"><b style="transform:scaleX(0.89)">n</b></i><i style="width:7px"><b>t</b></i><i style="width:7px"><b>e</b></i><i style="width:7px"><b>r</b></i><i style="width:7px"><b>f</b></i><i style="width:7px"><b>a</b></i><i style="width:7px"><b>c</b></i><i style="width:7px"><b>e</b></i></div>
<div style="left:238px;top:119px;width:1px;height:73px;background:repeating-linear-gradient(to bottom,#A0A0A0 0 1px,transparent 1px 2px)"></div>
<div style="left:240px;top:127px;width:8px;height:1px;background:repeating-linear-gradient(to right,#A0A0A0 0 1px,transparent 1px 2px)"></div>
<svg style="left:249px;top:122px" width="16" height="10" viewBox="0 0 16 10" shape-rendering="crispEdges"><defs><linearGradient id="gr" x1="0" y1="0" x2="1" y2="1"><stop offset="0" stop-color="#F0F0F0"/><stop offset="1" stop-color="#909090"/></linearGradient><pattern id="chk" width="2" height="2" patternUnits="userSpaceOnUse"><rect width="2" height="2" fill="#fff"/><rect width="1" height="1" fill="#4040E0"/><rect x="1" y="1" width="1" height="1" fill="#4040E0"/></pattern></defs><rect x="0" y="2" width="3" height="2" fill="#0000C0"/><rect x="0" y="5" width="3" height="2" fill="#0000C0"/><rect x="12" y="4" width="4" height="1" fill="#000"/><rect x="3.5" y="0.5" width="8" height="8" fill="url(#gr)" stroke="#000"/><path d="M12 1v8H4" stroke="#404040" fill="none"/></svg>
<div class="t" style="left:269px;top:121px;font-size:14px;"><i style="width:7px"><b>I</b></i><i style="width:7px"><b style="transform:scaleX(0.61)">N</b></i></div>
<div style="left:240px;top:143px;width:8px;height:1px;background:repeating-linear-gradient(to right,#A0A0A0 0 1px,transparent 1px 2px)"></div>
<svg style="left:249px;top:138px" width="16" height="10" viewBox="0 0 16 10" shape-rendering="crispEdges"><defs><linearGradient id="gr" x1="0" y1="0" x2="1" y2="1"><stop offset="0" stop-color="#F0F0F0"/><stop offset="1" stop-color="#909090"/></linearGradient><pattern id="chk" width="2" height="2" patternUnits="userSpaceOnUse"><rect width="2" height="2" fill="#fff"/><rect width="1" height="1" fill="#4040E0"/><rect x="1" y="1" width="1" height="1" fill="#4040E0"/></pattern></defs><rect x="0" y="2" width="3" height="1" fill="#000"/><rect x="0" y="6" width="3" height="1" fill="#000"/><rect x="12" y="3" width="4" height="3" fill="#0000C0"/><rect x="3.5" y="0.5" width="8" height="8" fill="url(#gr)" stroke="#000"/><path d="M12 1v8H4" stroke="#404040" fill="none"/></svg>
<div class="t" style="left:269px;top:137px;font-size:14px;"><i style="width:7px"><b style="transform:scaleX(0.61)">O</b></i><i style="width:7px"><b style="transform:scaleX(0.61)">U</b></i><i style="width:7px"><b style="transform:scaleX(0.72)">T</b></i></div>
<div style="left:240px;top:159px;width:8px;height:1px;background:repeating-linear-gradient(to right,#A0A0A0 0 1px,transparent 1px 2px)"></div>
<svg style="left:249px;top:154px" width="16" height="10" viewBox="0 0 16 10" shape-rendering="crispEdges"><defs><linearGradient id="gr" x1="0" y1="0" x2="1" y2="1"><stop offset="0" stop-color="#F0F0F0"/><stop offset="1" stop-color="#909090"/></linearGradient><pattern id="chk" width="2" height="2" patternUnits="userSpaceOnUse"><rect width="2" height="2" fill="#fff"/><rect width="1" height="1" fill="#4040E0"/><rect x="1" y="1" width="1" height="1" fill="#4040E0"/></pattern></defs><rect x="0" y="2" width="3" height="2" fill="#0000C0"/><rect x="0" y="5" width="3" height="2" fill="#0000C0"/><rect x="12" y="3" width="4" height="3" fill="#0000C0"/><rect x="3.5" y="0.5" width="8" height="8" fill="url(#gr)" stroke="#000"/><path d="M12 1v8H4" stroke="#404040" fill="none"/></svg>
<div class="t" style="left:269px;top:153px;font-size:14px;"><i style="width:7px"><b>I</b></i><i style="width:7px"><b style="transform:scaleX(0.61)">N</b></i><i style="width:7px"><b style="transform:scaleX(0.86)">_</b></i><i style="width:7px"><b style="transform:scaleX(0.61)">O</b></i><i style="width:7px"><b style="transform:scaleX(0.61)">U</b></i><i style="width:7px"><b style="transform:scaleX(0.72)">T</b></i></div>
<div style="left:240px;top:175px;width:8px;height:1px;background:repeating-linear-gradient(to right,#A0A0A0 0 1px,transparent 1px 2px)"></div>
<svg style="left:249px;top:170px" width="16" height="10" viewBox="0 0 16 10" shape-rendering="crispEdges"><defs><linearGradient id="gr" x1="0" y1="0" x2="1" y2="1"><stop offset="0" stop-color="#F0F0F0"/><stop offset="1" stop-color="#909090"/></linearGradient><pattern id="chk" width="2" height="2" patternUnits="userSpaceOnUse"><rect width="2" height="2" fill="#fff"/><rect width="1" height="1" fill="#4040E0"/><rect x="1" y="1" width="1" height="1" fill="#4040E0"/></pattern></defs><rect x="0" y="2" width="3" height="1" fill="#000"/><rect x="0" y="6" width="3" height="1" fill="#000"/><rect x="12" y="4" width="4" height="1" fill="#000"/><rect x="3.5" y="0.5" width="8" height="8" fill="url(#chk)" stroke="#000"/><path d="M12 1v8H4" stroke="#404040" fill="none"/></svg>
<div class="t" style="left:269px;top:169px;font-size:14px;"><i style="width:7px"><b style="transform:scaleX(0.72)">T</b></i><i style="width:7px"><b style="transform:scaleX(0.72)">E</b></i><i style="width:7px"><b style="transform:scaleX(0.50)">M</b></i><i style="width:7px"><b style="transform:scaleX(0.80)">P</b></i></div>
<div style="left:240px;top:191px;width:8px;height:1px;background:repeating-linear-gradient(to right,#A0A0A0 0 1px,transparent 1px 2px)"></div>
<svg style="left:249px;top:186px" width="16" height="10" viewBox="0 0 16 10" shape-rendering="crispEdges"><defs><linearGradient id="gr" x1="0" y1="0" x2="1" y2="1"><stop offset="0" stop-color="#F0F0F0"/><stop offset="1" stop-color="#909090"/></linearGradient><pattern id="chk" width="2" height="2" patternUnits="userSpaceOnUse"><rect width="2" height="2" fill="#fff"/><rect width="1" height="1" fill="#4040E0"/><rect x="1" y="1" width="1" height="1" fill="#4040E0"/></pattern></defs><rect x="0" y="2" width="3" height="1" fill="#000"/><rect x="0" y="6" width="3" height="1" fill="#000"/><rect x="12" y="3" width="4" height="3" fill="#0000C0"/><rect x="3.5" y="0.5" width="8" height="8" fill="url(#gr)" stroke="#000"/><path d="M12 1v8H4" stroke="#404040" fill="none"/></svg>
<div class="t" style="left:269px;top:185px;font-size:14px;"><i style="width:7px"><b style="transform:scaleX(0.66)">R</b></i><i style="width:7px"><b style="transform:scaleX(0.72)">E</b></i><i style="width:7px"><b style="transform:scaleX(0.72)">T</b></i><i style="width:7px"><b style="transform:scaleX(0.61)">U</b></i><i style="width:7px"><b style="transform:scaleX(0.66)">R</b></i><i style="width:7px"><b style="transform:scaleX(0.61)">N</b></i></div>
<svg style="left:234px;top:187px" width="9" height="9" viewBox="0 0 9 9" shape-rendering="crispEdges"><rect x="0.5" y="0.5" width="8" height="8" fill="#fff" stroke="#A0A0A0"/><path d="M2 4.5h5" stroke="#000"/><path d="M4.5 2v5" stroke="#000"/></svg>
<svg style="left:399px;top:123px" width="16" height="10" viewBox="0 0 16 10" shape-rendering="crispEdges"><defs><linearGradient id="gr" x1="0" y1="0" x2="1" y2="1"><stop offset="0" stop-color="#F0F0F0"/><stop offset="1" stop-color="#909090"/></linearGradient><pattern id="chk" width="2" height="2" patternUnits="userSpaceOnUse"><rect width="2" height="2" fill="#fff"/><rect width="1" height="1" fill="#4040E0"/><rect x="1" y="1" width="1" height="1" fill="#4040E0"/></pattern></defs><rect x="0" y="2" width="3" height="2" fill="#0000C0"/><rect x="0" y="5" width="3" height="2" fill="#0000C0"/><rect x="12" y="4" width="4" height="1" fill="#000"/><rect x="3.5" y="0.5" width="8" height="8" fill="url(#gr)" stroke="#000"/><path d="M12 1v8H4" stroke="#404040" fill="none"/></svg>
<div class="t" style="left:419px;top:121px;font-size:14px;"><i style="width:7px"><b>I</b></i><i style="width:7px"><b style="transform:scaleX(0.61)">N</b></i></div>
<svg style="left:399px;top:141px" width="16" height="10" viewBox="0 0 16 10" shape-rendering="crispEdges"><defs><linearGradient id="gr" x1="0" y1="0" x2="1" y2="1"><stop offset="0" stop-color="#F0F0F0"/><stop offset="1" stop-color="#909090"/></linearGradient><pattern id="chk" width="2" height="2" patternUnits="userSpaceOnUse"><rect width="2" height="2" fill="#fff"/><rect width="1" height="1" fill="#4040E0"/><rect x="1" y="1" width="1" height="1" fill="#4040E0"/></pattern></defs><rect x="0" y="2" width="3" height="1" fill="#000"/><rect x="0" y="6" width="3" height="1" fill="#000"/><rect x="12" y="3" width="4" height="3" fill="#0000C0"/><rect x="3.5" y="0.5" width="8" height="8" fill="url(#gr)" stroke="#000"/><path d="M12 1v8H4" stroke="#404040" fill="none"/></svg>
<div class="t" style="left:419px;top:139px;font-size:14px;"><i style="width:7px"><b style="transform:scaleX(0.61)">O</b></i><i style="width:7px"><b style="transform:scaleX(0.61)">U</b></i><i style="width:7px"><b style="transform:scaleX(0.72)">T</b></i></div>
<svg style="left:399px;top:159px" width="16" height="10" viewBox="0 0 16 10" shape-rendering="crispEdges"><defs><linearGradient id="gr" x1="0" y1="0" x2="1" y2="1"><stop offset="0" stop-color="#F0F0F0"/><stop offset="1" stop-color="#909090"/></linearGradient><pattern id="chk" width="2" height="2" patternUnits="userSpaceOnUse"><rect width="2" height="2" fill="#fff"/><rect width="1" height="1" fill="#4040E0"/><rect x="1" y="1" width="1" height="1" fill="#4040E0"/></pattern></defs><rect x="0" y="2" width="3" height="2" fill="#0000C0"/><rect x="0" y="5" width="3" height="2" fill="#0000C0"/><rect x="12" y="3" width="4" height="3" fill="#0000C0"/><rect x="3.5" y="0.5" width="8" height="8" fill="url(#gr)" stroke="#000"/><path d="M12 1v8H4" stroke="#404040" fill="none"/></svg>
<div class="t" style="left:419px;top:157px;font-size:14px;"><i style="width:7px"><b>I</b></i><i style="width:7px"><b style="transform:scaleX(0.61)">N</b></i><i style="width:7px"><b style="transform:scaleX(0.86)">_</b></i><i style="width:7px"><b style="transform:scaleX(0.61)">O</b></i><i style="width:7px"><b style="transform:scaleX(0.61)">U</b></i><i style="width:7px"><b style="transform:scaleX(0.72)">T</b></i></div>
<svg style="left:399px;top:177px" width="16" height="10" viewBox="0 0 16 10" shape-rendering="crispEdges"><defs><linearGradient id="gr" x1="0" y1="0" x2="1" y2="1"><stop offset="0" stop-color="#F0F0F0"/><stop offset="1" stop-color="#909090"/></linearGradient><pattern id="chk" width="2" height="2" patternUnits="userSpaceOnUse"><rect width="2" height="2" fill="#fff"/><rect width="1" height="1" fill="#4040E0"/><rect x="1" y="1" width="1" height="1" fill="#4040E0"/></pattern></defs><rect x="0" y="2" width="3" height="1" fill="#000"/><rect x="0" y="6" width="3" height="1" fill="#000"/><rect x="12" y="4" width="4" height="1" fill="#000"/><rect x="3.5" y="0.5" width="8" height="8" fill="url(#chk)" stroke="#000"/><path d="M12 1v8H4" stroke="#404040" fill="none"/></svg>
<div class="t" style="left:419px;top:175px;font-size:14px;"><i style="width:7px"><b style="transform:scaleX(0.72)">T</b></i><i style="width:7px"><b style="transform:scaleX(0.72)">E</b></i><i style="width:7px"><b style="transform:scaleX(0.50)">M</b></i><i style="width:7px"><b style="transform:scaleX(0.80)">P</b></i></div>
<svg style="left:399px;top:195px" width="16" height="10" viewBox="0 0 16 10" shape-rendering="crispEdges"><defs><linearGradient id="gr" x1="0" y1="0" x2="1" y2="1"><stop offset="0" stop-color="#F0F0F0"/><stop offset="1" stop-color="#909090"/></linearGradient><pattern id="chk" width="2" height="2" patternUnits="userSpaceOnUse"><rect width="2" height="2" fill="#fff"/><rect width="1" height="1" fill="#4040E0"/><rect x="1" y="1" width="1" height="1" fill="#4040E0"/></pattern></defs><rect x="0" y="2" width="3" height="1" fill="#000"/><rect x="0" y="6" width="3" height="1" fill="#000"/><rect x="12" y="3" width="4" height="3" fill="#0000C0"/><rect x="3.5" y="0.5" width="8" height="8" fill="url(#gr)" stroke="#000"/><path d="M12 1v8H4" stroke="#404040" fill="none"/></svg>
<div class="t" style="left:419px;top:193px;font-size:14px;"><i style="width:7px"><b style="transform:scaleX(0.66)">R</b></i><i style="width:7px"><b style="transform:scaleX(0.72)">E</b></i><i style="width:7px"><b style="transform:scaleX(0.72)">T</b></i><i style="width:7px"><b style="transform:scaleX(0.61)">U</b></i><i style="width:7px"><b style="transform:scaleX(0.66)">R</b></i><i style="width:7px"><b style="transform:scaleX(0.61)">N</b></i></div>
<div class="t" style="left:223px;top:255px;font-size:14px;"><i style="width:7px"><b style="transform:scaleX(0.80)">F</b></i><i style="width:7px"><b style="transform:scaleX(0.66)">C</b></i><i style="width:7px"><b style="transform:scaleX(0.89)">2</b></i><i style="width:7px"></i><i style="width:7px"><b>:</b></i><i style="width:7px"></i><i style="width:7px"><b style="transform:scaleX(0.72)">T</b></i><i style="width:7px"><b>i</b></i><i style="width:7px"><b>t</b></i><i style="width:7px"><b>l</b></i><i style="width:7px"><b>e</b></i><i style="width:7px"><b>:</b></i></div>
<div style="left:224px;top:278px;width:566px;height:40px;background:#C0C0C0;border:1px solid #000"></div>
<div class="t" style="left:225px;top:281px;font-size:14px;"><i style="width:7px"><b style="transform:scaleX(0.66)">C</b></i><i style="width:7px"><b style="transform:scaleX(0.89)">o</b></i><i style="width:7px"><b style="transform:scaleX(0.57)">m</b></i><i style="width:7px"><b style="transform:scaleX(0.57)">m</b></i><i style="width:7px"><b>e</b></i><i style="width:7px"><b style="transform:scaleX(0.89)">n</b></i><i style="width:7px"><b>t</b></i><i style="width:7px"><b>:</b></i></div>
<div style="left:222px;top:324px;width:76px;height:18px;background:#11827C"></div>
<div style="left:222px;top:324px;width:76px;height:1px;background:repeating-linear-gradient(to right,#11827C 0 3px,#fff 3px 6px)"></div>
<div style="left:222px;top:325px;width:76px;height:1px;background:repeating-linear-gradient(to right,#fff 0 1px,#11827C 1px 4px,#fff 4px 6px)"></div>
<div style="left:222px;top:340px;width:76px;height:1px;background:repeating-linear-gradient(to right,#fff 0 1px,#11827C 1px 4px,#fff 4px 6px)"></div>
<div style="left:222px;top:341px;width:76px;height:1px;background:repeating-linear-gradient(to right,#11827C 0 3px,#fff 3px 6px)"></div>
<div style="left:222px;top:324px;width:1px;height:18px;background:repeating-linear-gradient(to bottom,#11827C 0 3px,#fff 3px 6px)"></div>
<div class="t" style="left:224px;top:326px;font-size:14px;font-weight:bold;color:#fff;-webkit-text-stroke:0.5px #fff"><i style="width:8px"><b style="transform:scaleX(0.71)">N</b></i><i style="width:8px"><b>e</b></i><i style="width:8px"><b>t</b></i><i style="width:8px"><b style="transform:scaleX(0.71)">w</b></i><i style="width:8px"><b>o</b></i><i style="width:8px"><b>r</b></i><i style="width:8px"><b style="transform:scaleX(0.92)">k</b></i><i style="width:8px"></i><i style="width:8px"><b>1</b></i></div>
<div class="t" style="left:296px;top:327px;font-size:14px;"><i style="width:7px"><b>:</b></i><i style="width:7px"></i><i style="width:7px"><b style="transform:scaleX(0.72)">T</b></i><i style="width:7px"><b>i</b></i><i style="width:7px"><b>t</b></i><i style="width:7px"><b>l</b></i><i style="width:7px"><b>e</b></i><i style="width:7px"><b>:</b></i></div>
<div style="left:224px;top:350px;width:566px;height:40px;background:#C0C0C0;border:1px solid #000"></div>
<div class="t" style="left:225px;top:353px;font-size:14px;"><i style="width:7px"><b style="transform:scaleX(0.66)">C</b></i><i style="width:7px"><b style="transform:scaleX(0.89)">o</b></i><i style="width:7px"><b style="transform:scaleX(0.57)">m</b></i><i style="width:7px"><b style="transform:scaleX(0.57)">m</b></i><i style="width:7px"><b>e</b></i><i style="width:7px"><b style="transform:scaleX(0.89)">n</b></i><i style="width:7px"><b>t</b></i><i style="width:7px"><b>:</b></i></div>
<div class="t red" style="left:265px;top:399px;font-size:14px;"><i style="width:7px"><b style="transform:scaleX(0.72)">L</b></i><i style="width:7px"></i><i style="width:7px"></i><i style="width:7px"></i><i style="width:7px"></i><i style="width:7px"></i><i style="width:7px"><b style="transform:scaleX(0.89)">#</b></i><i style="width:7px"><b style="transform:scaleX(0.61)">H</b></i><i style="width:7px"><b>I</b></i><i style="width:7px"><b style="transform:scaleX(0.61)">G</b></i><i style="width:7px"><b style="transform:scaleX(0.61)">H</b></i></div>
<div class="t red" style="left:265px;top:415px;font-size:14px;"><i style="width:7px"><b style="transform:scaleX(0.72)">L</b></i><i style="width:7px"></i><i style="width:7px"></i><i style="width:7px"></i><i style="width:7px"></i><i style="width:7px"></i><i style="width:7px"><b style="transform:scaleX(0.89)">#</b></i><i style="width:7px"><b style="transform:scaleX(0.72)">L</b></i><i style="width:7px"><b style="transform:scaleX(0.61)">O</b></i><i style="width:7px"><b style="transform:scaleX(0.47)">W</b></i></div>
<div class="t" style="left:265px;top:431px;font-size:14px;"><i style="width:7px"><b style="transform:scaleX(0.63)">&#8211;</b></i><i style="width:7px"><b style="transform:scaleX(0.66)">R</b></i></div>
<div class="t" style="left:265px;top:447px;font-size:14px;"><i style="width:7px"><b style="transform:scaleX(0.72)">L</b></i><i style="width:7px"></i><i style="width:7px"></i><i style="width:7px"></i><i style="width:7px"></i><i style="width:7px"></i><i style="width:7px"><b style="transform:scaleX(0.89)">2</b></i><i style="width:7px"><b>.</b></i><i style="width:7px"><b style="transform:scaleX(0.89)">7</b></i><i style="width:7px"><b style="transform:scaleX(0.89)">6</b></i><i style="width:7px"><b style="transform:scaleX(0.89)">4</b></i><i style="width:7px"><b style="transform:scaleX(0.89)">8</b></i><i style="width:7px"><b style="transform:scaleX(0.89)">0</b></i><i style="width:7px"><b style="transform:scaleX(0.89)">0</b></i><i style="width:7px"><b>e</b></i><i style="width:7px"><b style="transform:scaleX(0.79)">+</b></i><i style="width:7px"><b style="transform:scaleX(0.89)">0</b></i><i style="width:7px"><b style="transform:scaleX(0.89)">0</b></i><i style="width:7px"><b style="transform:scaleX(0.89)">4</b></i></div>
<div class="t" style="left:265px;top:463px;font-size:14px;"><i style="width:7px"><b style="transform:scaleX(0.72)">T</b></i><i style="width:7px"><b style="transform:scaleX(0.61)">A</b></i><i style="width:7px"><b style="transform:scaleX(0.61)">K</b></i></div>
<div class="t" style="left:265px;top:479px;font-size:14px;"><i style="width:7px"><b>/</b></i><i style="width:7px"><b style="transform:scaleX(0.66)">R</b></i></div>
<div class="t red" style="left:265px;top:495px;font-size:14px;"><i style="width:7px"><b style="transform:scaleX(0.72)">T</b></i><i style="width:7px"></i><i style="width:7px"></i><i style="width:7px"></i><i style="width:7px"></i><i style="width:7px"></i><i style="width:7px"><b style="transform:scaleX(0.89)">#</b></i><i style="width:7px"><b style="transform:scaleX(0.72)">T</b></i><i style="width:7px"><b style="transform:scaleX(0.72)">E</b></i><i style="width:7px"><b style="transform:scaleX(0.50)">M</b></i><i style="width:7px"><b style="transform:scaleX(0.80)">P</b></i><i style="width:7px"><b style="transform:scaleX(0.89)">2</b></i></div>
<div class="t red" style="left:265px;top:527px;font-size:14px;"><i style="width:7px"><b style="transform:scaleX(0.72)">L</b></i><i style="width:7px"></i><i style="width:7px"></i><i style="width:7px"></i><i style="width:7px"></i><i style="width:7px"></i><i style="width:7px"><b style="transform:scaleX(0.89)">#</b></i><i style="width:7px"><b style="transform:scaleX(0.80)">P</b></i><i style="width:7px"><b>I</b></i><i style="width:7px"><b style="transform:scaleX(0.47)">W</b></i></div>
<div class="t" style="left:265px;top:543px;font-size:14px;"><i style="width:7px"><b>I</b></i><i style="width:7px"><b style="transform:scaleX(0.72)">T</b></i><i style="width:7px"><b style="transform:scaleX(0.61)">D</b></i></div>
<div class="t" style="left:265px;top:559px;font-size:14px;"><i style="width:7px"><b style="transform:scaleX(0.61)">D</b></i><i style="width:7px"><b style="transform:scaleX(0.72)">T</b></i><i style="width:7px"><b style="transform:scaleX(0.66)">R</b></i></div>
<div class="t red" style="left:265px;top:575px;font-size:14px;"><i style="width:7px"><b style="transform:scaleX(0.72)">L</b></i><i style="width:7px"></i><i style="width:7px"></i><i style="width:7px"></i><i style="width:7px"></i><i style="width:7px"></i><i style="width:7px"><b style="transform:scaleX(0.89)">#</b></i><i style="width:7px"><b style="transform:scaleX(0.72)">T</b></i><i style="width:7px"><b style="transform:scaleX(0.72)">E</b></i><i style="width:7px"><b style="transform:scaleX(0.50)">M</b></i><i style="width:7px"><b style="transform:scaleX(0.80)">P</b></i><i style="width:7px"><b style="transform:scaleX(0.89)">2</b></i></div>
<div class="t" style="left:265px;top:591px;font-size:14px;"><i style="width:7px"><b>/</b></i><i style="width:7px"><b style="transform:scaleX(0.66)">R</b></i></div>
<div class="t red" style="left:265px;top:607px;font-size:14px;"><i style="width:7px"><b style="transform:scaleX(0.72)">L</b></i><i style="width:7px"></i><i style="width:7px"></i><i style="width:7px"></i><i style="width:7px"></i><i style="width:7px"></i><i style="width:7px"><b style="transform:scaleX(0.89)">#</b></i><i style="width:7px"><b style="transform:scaleX(0.72)">L</b></i><i style="width:7px"><b style="transform:scaleX(0.61)">O</b></i><i style="width:7px"><b style="transform:scaleX(0.47)">W</b></i></div>
<div class="t" style="left:265px;top:623px;font-size:14px;"><i style="width:7px"><b style="transform:scaleX(0.79)">+</b></i><i style="width:7px"><b style="transform:scaleX(0.66)">R</b></i></div>
<div class="t red" style="left:265px;top:639px;font-size:14px;"><i style="width:7px"><b style="transform:scaleX(0.72)">T</b></i><i style="width:7px"></i><i style="width:7px"></i><i style="width:7px"></i><i style="width:7px"></i><i style="width:7px"></i><i style="width:7px"><b style="transform:scaleX(0.89)">#</b></i><i style="width:7px"><b style="transform:scaleX(0.61)">O</b></i><i style="width:7px"><b style="transform:scaleX(0.61)">U</b></i><i style="width:7px"><b style="transform:scaleX(0.72)">T</b></i><i style="width:7px"><b style="transform:scaleX(0.86)">_</b></i><i style="width:7px"><b style="transform:scaleX(0.66)">R</b></i><i style="width:7px"><b style="transform:scaleX(0.72)">E</b></i><i style="width:7px"><b style="transform:scaleX(0.61)">A</b></i><i style="width:7px"><b style="transform:scaleX(0.72)">L</b></i></div>
<div class="t" style="left:265px;top:655px;font-size:14px;"><i style="width:7px"><b style="transform:scaleX(0.66)">R</b></i><i style="width:7px"><b style="transform:scaleX(0.61)">N</b></i><i style="width:7px"><b style="transform:scaleX(0.61)">D</b></i></div>
<div class="t red" style="left:265px;top:671px;font-size:14px;"><i style="width:7px"><b style="transform:scaleX(0.72)">T</b></i><i style="width:7px"></i><i style="width:7px"></i><i style="width:7px"></i><i style="width:7px"></i><i style="width:7px"></i><i style="width:7px"><b style="transform:scaleX(0.89)">#</b></i><i style="width:7px"><b style="transform:scaleX(0.61)">O</b></i><i style="width:7px"><b style="transform:scaleX(0.61)">U</b></i><i style="width:7px"><b style="transform:scaleX(0.72)">T</b></i><i style="width:7px"><b style="transform:scaleX(0.86)">_</b></i><i style="width:7px"><b>I</b></i><i style="width:7px"><b style="transform:scaleX(0.61)">N</b></i><i style="width:7px"><b style="transform:scaleX(0.72)">T</b></i></div>
</body></html>
